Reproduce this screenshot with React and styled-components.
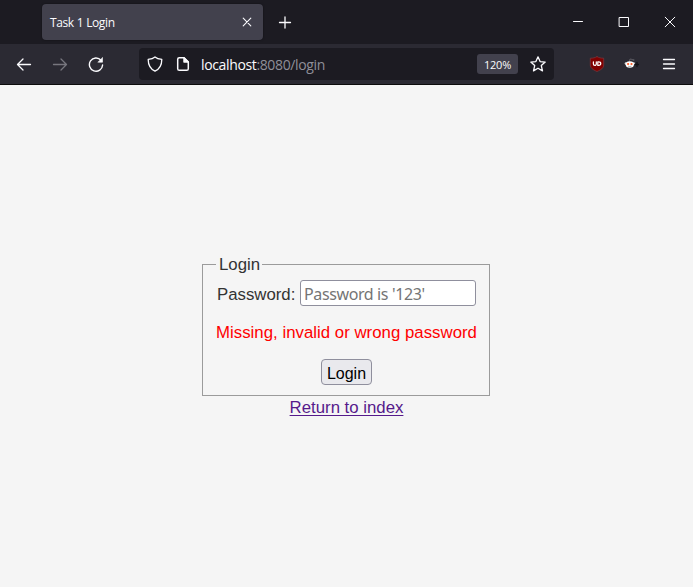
import React from "react";
import styled, { createGlobalStyle } from "styled-components";

const GlobalStyle = createGlobalStyle`
  * { box-sizing: border-box; }
  body { margin: 0; background: #f5f5f5; overflow: hidden; }
`;

const Window = styled.div`
  display: flex;
  flex-direction: column;
  width: 693px;
  height: 587px;
  background: #f5f5f5;
`;

const TitleBar = styled.header`
  display: flex;
  align-items: center;
  flex: 0 0 44px;
  padding-left: 42px;
  background: #1c1b22;
`;

const Tab = styled.div`
  display: flex;
  align-items: center;
  justify-content: space-between;
  width: 221px;
  height: 36px;
  padding: 0 8px;
  border-radius: 4px;
  background: #42414d;
  box-shadow: 0 0 2px rgba(0, 0, 0, 0.5);
`;

const TabTitle = styled.span`
  padding-top: 2px;
  font: 12px/16px "Open Sans", "Noto Sans", sans-serif;
  letter-spacing: -0.38px;
  word-spacing: 0.2px;
  color: #fbfbfe;
`;

const IconButton = styled.button`
  display: flex;
  align-items: center;
  justify-content: center;
  flex: none;
  width: ${(p) => p.$width}px;
  height: 32px;
  padding: 0;
  border: 0;
  background: none;
  color: ${(p) => (p.$dim ? "#77767e" : "#fbfbfe")};
`;

const WindowControls = styled.div`
  display: flex;
  margin-left: auto;
`;

const Toolbar = styled.nav`
  display: flex;
  align-items: center;
  flex: 0 0 41px;
  padding: 0 4px 0 6px;
  border-bottom: 1px solid #0c0c0d;
  background: #2b2a33;
`;

const AddressBar = styled.div`
  display: flex;
  align-items: center;
  flex: none;
  width: 415px;
  height: 32px;
  margin: 0 27px 0 25px;
  padding-left: 2px;
  border-radius: 4px;
  background: #1c1b22;
`;

const Url = styled.span`
  flex: 1;
  padding: 2px 0 0 4px;
  font: 14px/20px "Open Sans", "Noto Sans", sans-serif;
  letter-spacing: -0.36px;
  color: #8f8f98;
`;

const Host = styled.span`
  color: #fbfbfe;
`;

const ZoomBadge = styled.span`
  width: 41px;
  height: 20px;
  margin-right: 4px;
  border-radius: 3px;
  background: #42414d;
  color: #fbfbfe;
  font: 11px/22px "Open Sans", "Noto Sans", sans-serif;
  letter-spacing: -0.2px;
  text-align: center;
`;

const Page = styled.main`
  display: flex;
  flex-direction: column;
  align-items: center;
  flex: 1;
  padding-top: 170px;
  font: 16.8px/19px "Liberation Sans", Arial, sans-serif;
  color: #333;
`;

const LoginBox = styled.fieldset`
  width: 288px;
  height: 141px;
  margin: 0 1px 0 0;
  padding: 6px 0 0;
  border: 1px solid #9b9b9b;
`;

const Legend = styled.legend`
  height: 19px;
  margin-left: 13px;
  padding: 0 2px 0 3px;
`;

const Field = styled.label`
  display: flex;
  align-items: center;
  padding-left: 14px;
`;

const FieldName = styled.span`
  width: 83px;
  padding-top: 2px;
`;

const PasswordInput = styled.input`
  width: 176px;
  height: 26px;
  padding: 1px 3px 0;
  border: 1px solid #8f8f9d;
  border-radius: 3px;
  background: #fff;
  font: 16px "Noto Sans", sans-serif;
  letter-spacing: -0.38px;
  &::placeholder { color: #757575; opacity: 1; }
`;

const ErrorText = styled.p`
  margin: 17px 0;
  padding-left: 1px;
  color: #f00;
  letter-spacing: 0.02px;
  text-align: center;
  white-space: nowrap;
`;

const SubmitButton = styled.button`
  display: block;
  width: 51px;
  height: 26px;
  margin-left: 118px;
  padding: 3px 0 0;
  border: 1px solid #8f8f9d;
  border-radius: 4px;
  background: #e9e9ed;
  color: #000;
  font: 16px "Liberation Sans", Arial, sans-serif;
`;

const IndexLink = styled.a`
  margin-top: 2px;
  color: #551a8b;
  text-decoration: underline;
  text-decoration-thickness: 1px;
  text-underline-offset: 2px;
`;

const Svg = styled.svg`
  display: block;
  flex: none;
  fill: none;
  stroke: currentColor;
  stroke-width: ${(p) => p.$stroke || 1.3};
  stroke-linecap: round;
  stroke-linejoin: round;
`;

const Icon = ({ size = 16, stroke, children }) => (
  <Svg width={size} height={size} viewBox={`0 0 ${size} ${size}`} $stroke={stroke}>
    {children}
  </Svg>
);

const BlockerBadge = () => (
  <Icon>
    <path d="M8 .6C6.2 1.800 4 2.200 1.300 2.200V9c0 3 2.700 4.800 6.700 6.500 4-1.700 6.700-3.500 6.700-6.500V2.200C12 2.200 9.800 1.800 8 .6z" fill="#800000" stroke="#74373d" strokeWidth=".8" />
    <path d="M4.400 5.800v2.100c0 1.900 2.900 1.900 2.900 0V5.800M8.800 5.800v3.600h.8c2.900 0 2.900-3.600 0-3.600z" stroke="#fff" strokeWidth="1.200" />
  </Icon>
);

const RedditBadge = () => (
  <Icon>
    <path d="M6 6l1-3 2.500.5" stroke="#66656c" strokeWidth=".8" />
    <circle cx="10.500" cy="4" r="1" fill="#55545c" stroke="none" />
    <circle cx="2.900" cy="7.500" r="1.200" fill="#ddd" stroke="none" />
    <circle cx="10.700" cy="7.500" r="1.200" fill="#ddd" stroke="none" />
    <ellipse cx="6.800" cy="8.500" rx="4.100" ry="3.300" fill="#fff" stroke="none" />
    <circle cx="5.100" cy="8" r="1.100" fill="#ff5a25" stroke="none" />
    <circle cx="8.500" cy="8" r="1.100" fill="#ff5a25" stroke="none" />
    <path d="M5.400 10.300q1.400.8 2.800 0" stroke="#777" strokeWidth=".6" />
    <path d="M12 8.500h3.500M14 6.500v4" stroke="#111116" strokeWidth="1.300" />
  </Icon>
);

export default function App() {
  return (
    <Window>
      <GlobalStyle />
      <TitleBar>
        <Tab>
          <TabTitle>Task 1 Login</TabTitle>
          <IconButton $width={16} aria-label="Close tab">
            <Icon stroke={1.1}><path d="M4.200 4.200l7.600 7.600M11.800 4.200l-7.600 7.600" /></Icon>
          </IconButton>
        </Tab>
        <IconButton $width={43} aria-label="New tab">
          <Icon><path d="M2.500 8.500h11M8 3v11" /></Icon>
        </IconButton>
        <WindowControls>
          <IconButton $width={46} aria-label="Minimize">
            <Icon size={12} stroke={1}><path d="M1.500 5.500h9" /></Icon>
          </IconButton>
          <IconButton $width={46} aria-label="Maximize">
            <Icon size={12} stroke={1}><path d="M1.500 1.500h9v9h-9z" /></Icon>
          </IconButton>
          <IconButton $width={46} aria-label="Close">
            <Icon size={12} stroke={1}><path d="M1.200 1.200l9.600 9.600M10.800 1.200l-9.600 9.600" /></Icon>
          </IconButton>
        </WindowControls>
      </TitleBar>
      <Toolbar>
        <IconButton $width={36} aria-label="Back">
          <Icon><path d="M14.500 8.500H1.500M7 3L1.500 8.500 7 14" /></Icon>
        </IconButton>
        <IconButton $width={36} $dim aria-label="Forward">
          <Icon><path d="M1.500 8.500h13M9 3l5.500 5.500L9 14" /></Icon>
        </IconButton>
        <IconButton $width={36} aria-label="Reload">
          <Icon stroke={1.4}>
            <path d="M13 4.300A6.600 6.600 0 1 0 14.600 9" />
            <path d="M14.500 1.800v4.400H10.200z" fill="currentColor" strokeWidth=".6" />
          </Icon>
        </IconButton>
        <AddressBar>
          <IconButton $width={28} aria-label="Tracking protection">
            <Icon><path d="M8 .9C6.300 2.300 4 3 1.200 3.400c0 5.100 1.600 9.200 6.800 11.700 5.200-2.500 6.800-6.600 6.800-11.700C12 3 9.700 2.300 8 .9z" /></Icon>
          </IconButton>
          <IconButton $width={28} aria-label="Site information">
            <Icon stroke={1.5}>
              <path d="M9 1.700H4.300Q2.700 1.700 2.700 3.300v9.400q0 1.600 1.600 1.600h7.400q1.600 0 1.600-1.600V6z" />
              <path d="M9 1.700V6h4.300z" fill="currentColor" />
            </Icon>
          </IconButton>
          <Url><Host>localhost</Host>:8080/login</Url>
          <ZoomBadge>120%</ZoomBadge>
          <IconButton $width={32} aria-label="Bookmark">
            <Icon><path d="M8 .8l2.100 4.800 5.100.5-3.900 3.500 1.200 5.300L8 12.200l-4.500 2.700 1.200-5.300L.8 6.100l5.100-.5z" /></Icon>
          </IconButton>
        </AddressBar>
        <IconButton $width={32} aria-label="Content blocker"><BlockerBadge /></IconButton>
        <IconButton $width={36} aria-label="Reddit extension"><RedditBadge /></IconButton>
        <IconButton $width={40} aria-label="Menu">
          <Icon><path d="M2.500 3.500h11M2.500 8h11M2.500 12.500h11" /></Icon>
        </IconButton>
      </Toolbar>
      <Page>
        <LoginBox>
          <Legend>Login</Legend>
          <Field>
            <FieldName>Password:</FieldName>
            <PasswordInput type="password" placeholder="Password is '123'" />
          </Field>
          <ErrorText>Missing, invalid or wrong password</ErrorText>
          <SubmitButton>Login</SubmitButton>
        </LoginBox>
        <IndexLink href="#">Return to index</IndexLink>
      </Page>
    </Window>
  );
}
